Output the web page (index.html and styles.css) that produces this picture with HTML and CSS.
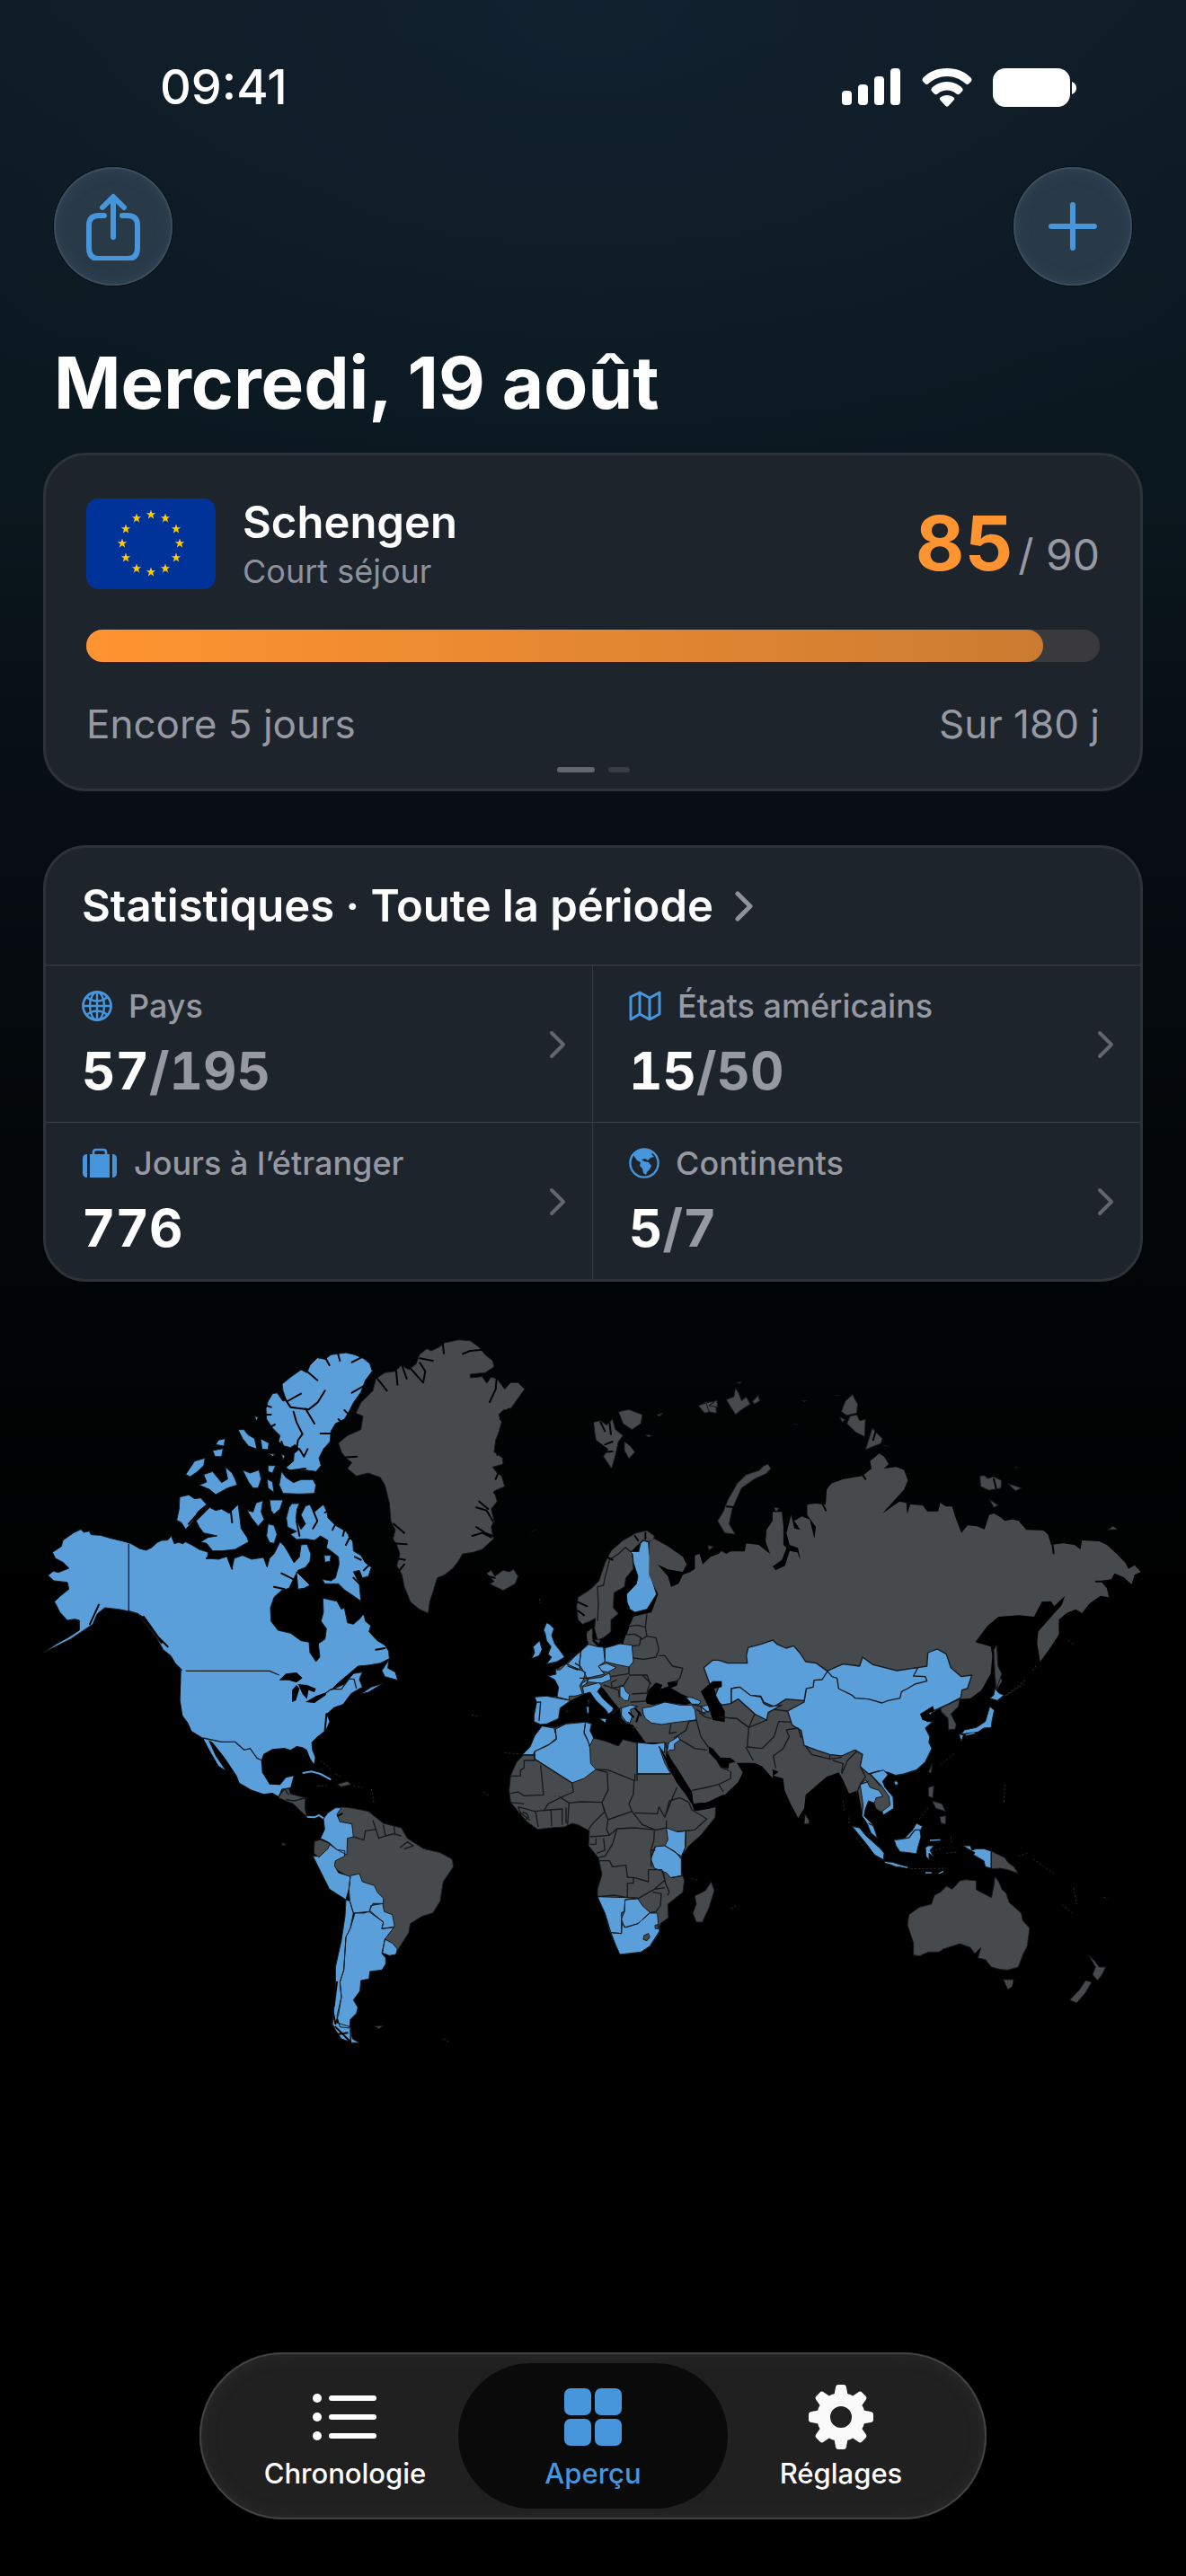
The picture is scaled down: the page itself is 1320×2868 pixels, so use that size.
FILE: index.html
```html
<!DOCTYPE html>
<html lang="fr">
<head>
<meta charset="utf-8">
<meta name="viewport" content="width=device-width, initial-scale=1">
<title>Aperçu</title>
<link rel="stylesheet" href="styles.css">
</head>
<body>
<div class="app">
  <div class="status">
    <span class="clock">09:41</span>
    <div class="indicators">
      <svg width="66" height="42" viewBox="0 0 66 42" fill="#fff" aria-hidden="true"><rect x="0" y="25" width="11" height="16" rx="4"/><rect x="18" y="18" width="11" height="23" rx="4"/><rect x="36" y="9" width="11" height="32" rx="4"/><rect x="54" y="0" width="11" height="41" rx="4"/></svg>
      <svg width="56" height="43" viewBox="0 0 56 43" fill="#fff" aria-hidden="true"><path d="M28 0C39 0 48 4 54.500 10.500Q56.500 13 54.500 15L52.500 17Q50.500 19 48.500 17C43 12 36 9 28 9S13 12 7.500 17Q5.500 19 3.500 17L1.500 15Q-.5 13 1.500 10.500C8 4 17 0 28 0Z"/><path d="M28 15C35 15 41 18 45 22Q46.500 24 45 25.500L42 28.500Q40.500 30 38.500 28.500C35 25.500 32 24.500 28 24.500S21 25.500 17.500 28.500Q15.500 30 14 28.500L11 25.500Q9.500 24 11 22C15 18 21 15 28 15Z"/><path d="M28 30C31 30 33.500 31 35.500 32.500Q37 34 35.500 35.500L29.500 42Q28 43.500 26.500 42L20.500 35.500Q19 34 20.500 32.500C22.500 31 25 30 28 30Z"/></svg>
      <svg width="93" height="43" viewBox="0 0 93 43" fill="#fff" aria-hidden="true"><rect width="86" height="43" rx="14"/><path d="M88 15Q93 17 93 22T88 29Z"/></svg>
    </div>
  </div>

  <header class="toolbar">
    <button class="round" type="button" aria-label="Partager">
      <svg width="60" height="76" viewBox="0 0 60 76" aria-hidden="true"><path d="M20 26H14Q3 26 3 37V62Q3 74 14 74H46Q57 74 57 62V37Q57 26 46 26H40M30 50V6M18 17L30 5L42 17"/></svg>
    </button>
    <button class="round" type="button" aria-label="Ajouter">
      <svg width="54" height="54" viewBox="0 0 54 54" aria-hidden="true"><path d="M27 3V51M3 27H51"/></svg>
    </button>
  </header>

  <h1>Mercredi, 19 août</h1>

  <section class="card stay">
    <div class="stay-head">
      <svg class="flag" width="144" height="101" viewBox="0 0 144 101" role="img" aria-label="Union européenne">
        <defs><path id="star" d="M0-5.500L1.300-1.700H5.200L2.100.6L3.200 4.500L0 2.200L-3.200 4.500L-2.100.6L-5.200-1.700H-1.300Z"/></defs>
        <rect width="144" height="101" rx="14" fill="#003399"/>
        <g fill="#ffcc00"><use href="#star" x="72" y="18"/><use href="#star" x="88" y="22"/><use href="#star" x="100" y="34"/><use href="#star" x="104" y="50"/><use href="#star" x="100" y="66"/><use href="#star" x="88" y="78"/><use href="#star" x="72" y="82"/><use href="#star" x="56" y="78"/><use href="#star" x="44" y="66"/><use href="#star" x="40" y="50"/><use href="#star" x="44" y="34"/><use href="#star" x="56" y="22"/></g>
      </svg>
      <div class="stay-name">
        <h2>Schengen</h2>
        <p>Court séjour</p>
      </div>
      <p class="stay-count"><strong>85</strong><span>/ 90</span></p>
    </div>
    <div class="bar" role="progressbar" aria-label="Jours utilisés" aria-valuemin="0" aria-valuemax="90" aria-valuenow="85"><div class="bar-fill" style="width:94.4%"></div></div>
    <div class="stay-foot"><span>Encore 5 jours</span><span>Sur 180 j</span></div>
    <div class="dots"><i class="on"></i><i></i></div>
  </section>

  <section class="card stats">
    <a class="stats-head" href="#stats"><h2>Statistiques · Toute la période</h2>
      <svg width="20" height="34" viewBox="0 0 20 34" aria-hidden="true"><path d="M3 3L17 17L3 31"/></svg></a>
    <div class="grid">
      <a class="cell" href="#pays">
        <span class="label"><svg width="34" height="34" viewBox="0 0 34 34" fill="none" stroke="#4795db" stroke-width="2.400" aria-hidden="true"><circle cx="17" cy="17" r="15.500" stroke-width="2.800"/><path d="M17 1V33M1 17H33M5 7Q17 16 29 7M5 27Q17 18 29 27"/><ellipse cx="17" cy="17" rx="8" ry="15.500"/></svg>Pays</span>
        <span class="value">57<em>/195</em></span>
        <svg class="go" width="20" height="32" viewBox="0 0 20 32" aria-hidden="true"><path d="M3 3L16 16L3 29"/></svg>
      </a>
      <a class="cell" href="#etats">
        <span class="label"><svg width="36" height="34" viewBox="0 0 36 34" fill="none" stroke="#4795db" stroke-width="3" stroke-linejoin="round" aria-hidden="true"><path d="M2 7L12 2L23 8L34 2V26L23 32L12 26L2 32ZM12 2V26M23 8V32"/></svg>États américains</span>
        <span class="value">15<em>/50</em></span>
        <svg class="go" width="20" height="32" viewBox="0 0 20 32" aria-hidden="true"><path d="M3 3L16 16L3 29"/></svg>
      </a>
      <a class="cell" href="#jours">
        <span class="label"><svg width="40" height="34" viewBox="0 0 40 34" fill="#4795db" aria-hidden="true"><path d="M6 7V33Q1 33 1 28V12Q1 7 6 7ZM34 7Q39 7 39 12V28Q39 33 34 33Z"/><rect x="9" y="7" width="22" height="26"/><path d="M13 9V5Q13 2 16 2H24Q27 2 27 5V9" fill="none" stroke="#4795db" stroke-width="2.600"/></svg>Jours à l’étranger</span>
        <span class="value">776</span>
        <svg class="go" width="20" height="32" viewBox="0 0 20 32" aria-hidden="true"><path d="M3 3L16 16L3 29"/></svg>
      </a>
      <a class="cell" href="#continents">
        <span class="label"><svg width="34" height="34" viewBox="0 0 34 34" aria-hidden="true"><circle cx="17" cy="17" r="15.600" fill="none" stroke="#4795db" stroke-width="2.400"/><path fill="#4795db" d="M5 8Q11 1 18 1Q24 2 27 5L25 7L28 10L24 11L21 14L18 12L14 13L17 15L22 16L25 20L23 24L20 27L19 30L16 28L15 23L12 20L13 16L9 14Z"/></svg>Continents</span>
        <span class="value">5<em>/7</em></span>
        <svg class="go" width="20" height="32" viewBox="0 0 20 32" aria-hidden="true"><path d="M3 3L16 16L3 29"/></svg>
      </a>
    </div>
  </section>

  <svg class="map" viewBox="48 1460 1224 840" role="img" aria-label="Carte des pays visités">
    <!-- Canada and Alaska -->
    <g transform="translate(40 1480) scale(.33333)">
      <path class="v" d="M150 668L160 678 178 674 184 686 215 688 250 698 300 710 318 716 345 732 368 738 388 728 405 712 420 705 440 704 452 690 462 716 476 712 490 716 500 710 520 720 545 735 575 745 572 765 610 768 640 758 655 798 662 765 690 755 720 768 760 762 772 795 780 765 795 750 815 710 830 725 845 750 862 780 880 760 885 720 905 718 918 750 915 775 900 795 875 805 862 830 845 865 820 872 795 895 783 930 785 975 808 1005 850 1015 885 1040 912 1045 915 1080 935 1110 948 1095 943 1050 965 1035 970 1000 952 975 960 945 958 898 990 905 1005 908 1020 935 1030 930 1040 980 1060 985 1080 968 1095 950 1100 975 1118 990 1112 1010 1140 1040 1165 1055 1178 1075 1180 1100 1150 1115 1110 1122 1075 1125 1040 1155 1010 1180 985 1205 1030 1185 1060 1150 1090 1145 1080 1170 1090 1195 1060 1212 1025 1232 995 1260 500 1260 485 1190 500 1165 485 1135 465 1115 450 1090 425 1070 405 1035 390 1000 365 965 340 950 312 942 275 935 230 930 205 950 190 985 160 1005 115 1035 65 1060 25 1080 70 1050 110 1028 145 1005 145 972 130 968 105 972 80 945 62 910 80 892 110 868 105 845 60 840 40 822 58 808 75 812 110 798 90 778 65 765 55 745 85 725 90 705 125 680Z"/>
      <path class="v" d="M822 183L850 160 885 135 905 145 915 120 940 95 965 100 985 85 1035 78 1065 85 1095 98 1115 115 1123 140 1100 170 1085 210 1060 245 1045 275 1030 300 1000 315 985 340 982 375 960 400 945 430 952 455 935 475 900 470 850 472 835 462 860 440 862 415 880 400 865 385 850 395 830 390 810 375 815 355 790 330 770 300 768 265 775 240 790 215 805 212 825 240 835 235 825 205Z"/>
      <path class="v" d="M820 475L835 495 860 512 885 502 925 502 935 520 930 548 880 550 825 548 812 520ZM675 335L695 335 708 352 730 365 738 400 710 390 690 365ZM750 365L778 380 775 402 755 400ZM610 370L632 365 628 390 600 385ZM590 405L625 398 620 425 598 425ZM500 485L530 440 565 430 560 455 540 475 515 492ZM545 520L570 510 560 485 590 475 620 512 640 500 632 460 655 480 665 500 672 520 640 530 600 552 580 535ZM690 470L715 480 745 470 752 500 742 530 725 530 710 510ZM775 455L800 455 790 480 775 475ZM772 500L790 510 795 545 775 530ZM775 414L800 418 790 424ZM820 418L832 422 825 435ZM730 290L742 294 736 306Z"/>
      <path class="v" d="M480 560L510 553 530 566 550 563 570 585 540 610 525 640 500 668 485 645 470 638 478 600ZM580 595L600 605 620 600 645 615 675 585 680 620 685 665 705 695 710 710 665 735 620 740 590 740 570 715 550 710 575 695 605 690 560 680 545 660 535 640 560 615ZM705 605L725 610 735 580 758 572 752 610 762 635 742 658 720 630ZM780 570L825 570 815 600 795 618 785 605ZM775 650L795 655 805 685 795 715 780 712 770 690ZM845 595L855 582 880 582 872 600 868 630 885 668 900 650 885 620 900 590 915 585 930 610 960 585 972 610 975 630 1000 655 1035 675 1058 705 1060 740 1085 755 1100 780 1120 795 1110 825 1090 830 1080 805 1060 810 1080 850 1085 908 1060 890 1030 870 1010 850 965 850 955 835 985 840 1000 830 1012 785 1010 760 985 740 970 730 975 705 950 690 930 705 900 700 870 702 850 685 870 675 840 660 836 630ZM870 810L890 830 915 855 895 865 875 868ZM962 755L985 755 982 775 965 778ZM1155 1140L1178 1105 1175 1132 1200 1145 1208 1172 1165 1160ZM1085 1218L1120 1195 1160 1182 1110 1212Z"/>
      <path class="fj" d="M820 215L850 260 910 268 940 245 965 205M860 275L870 310 890 350 875 370 870 400M900 265L930 315M840 240L885 215M905 140L940 170M965 92L980 120M1055 212L1110 180M1085 95L1055 110M1008 80L1015 105M880 400L895 425 907 400M950 348L985 348M555 600L510 650M600 575L650 600 655 645M800 735L812 690M885 590L870 640 880 690M915 580L940 640 925 665M1060 830L1090 860M1050 690L1035 720M820 815L860 835M795 860L830 868M570 765L650 745M210 920L180 985M360 960L420 1045M380 1000L440 1060M640 760L655 800M860 505L940 480M830 475L900 465M1045 690L1065 715M1030 670L1025 690M1000 650L990 670M1120 1130L1085 1160M985 600L965 612M1065 760L1085 770M1110 790L1095 805M1105 960L1085 945M1165 1065L1135 1070M770 255L785 260M770 285L785 285M785 325L798 318M820 375L825 390M1030 270L1040 280M1010 300L1020 310"/>
    </g>

    <!-- United States, Central and South America -->
    <g transform="translate(160 1840) scale(.33333)">
      <path class="v base" d="M125 60L420 60 460 75 490 95 520 110 560 130 545 165 600 140 640 122 700 125 685 145 665 172 635 182 610 205 620 230 608 258 580 280 560 300 562 325 572 350 568 372 555 352 545 325 530 316 510 312 490 325 470 318 430 322 400 338 392 360 395 400 420 440 455 442 475 418 500 412 490 450 460 455 450 480 430 468 400 472 360 458 320 435 310 410 270 350 230 300 216 292 240 345 272 392 250 378 225 335 198 285 160 262 148 235 130 210 122 160Z"/>
      <path class="g" d="M450 485L465 455 485 455 490 472 540 485 538 520 545 548 525 530 500 505ZM645 440L680 430 692 440 660 448ZM460 635L475 640 465 645ZM770 1248L800 1246 785 1256Z"/>
      <path class="g" d="M640 530L660 515 700 520 750 530 775 550 800 570 860 585 880 620 935 655 990 668 1030 690 1034 715 1000 765 990 830 965 870 930 880 890 905 885 935 850 990 815 1000 760 980 740 860 720 770 635 720 650 620Z"/>
      <path class="v" d="M600 555L615 535 640 518 660 518 645 540 655 565 695 572 700 615 680 620 678 675 645 658 620 635 590 620 604 590ZM565 680L585 680 620 640 645 658 672 662 670 680 640 695 637 712 650 735 690 748 685 790 675 825 620 790 600 750ZM690 745L720 738 730 765 770 778 780 800 800 820 800 838 765 838 752 865 700 870 688 830 685 790ZM755 862L758 845 798 838 803 865 830 875 838 915 795 922 800 900ZM675 825L688 830 700 870 690 920 675 950 668 1060 655 1100 660 1150 650 1210 640 1235 690 1250 690 1300 660 1290 640 1260 630 1240 635 1190 640 1110 640 1050 660 960 672 880ZM705 870L735 870 752 865 800 900 795 922 835 918 805 957 795 1005 808 1020 808 1040 795 1060 755 1065 752 1090 725 1095 722 1130 700 1160 715 1185 710 1205 690 1225 687 1254 655 1250 645 1215 660 1150 655 1100 668 1060 675 950 690 920ZM690 1258L697 1290 720 1303 692 1303ZM805 957L830 970 847 990 842 1008 820 1012 797 1003Z"/>
      <path class="g" d="M570 630L590 625 622 638 615 655 585 683 568 670Z"/>
      <path class="b" d="M198 285L260 298 305 298 335 325 355 320 378 352 395 360M700 615L735 626 740 595 775 590 765 560M775 590L785 620 807 612 800 575M807 612L835 605 860 612M835 580L840 610M545 485L500 495 475 490M535 485L505 495M450 480L470 455 485 475M855 652L880 632 900 645 870 655"/>
      <path class="fj" d="M645 1100L635 1180M630 1190L640 1240M640 1250L690 1300M645 1275L680 1270M610 205L605 260M648 545L662 538"/>
      <path class="vl" d="M530 402L560 397 590 405 625 424M545 548L570 550 585 543 600 553"/>
      <path class="gl" d="M590 360L625 390M640 405L660 415M580 445H610M700 445L730 450M760 455L768 500M1095 208L1115 212M1135 465L1155 480M1000 1290L1025 1302"/>
    </g>

    <!-- Great Lakes and the Canadian borders -->
    <g transform="translate(40 1480) scale(.33333)">
      <path class="sea" d="M812 1172L835 1150 870 1146 890 1165 870 1180 845 1172ZM855 1245L855 1205 870 1188 880 1200 868 1240ZM875 1185L905 1188 935 1200 930 1212 910 1205 905 1235 890 1218ZM900 1245L935 1225 970 1212 968 1222 930 1248Z"/>
      <path class="b" d="M310 716V942M312 942L340 950 420 1050M500 1141H780L812 1155M968 1215L985 1202H1020L1045 1168H1062L1070 1200"/>
    </g>

    <!-- Greenland, Iceland, Svalbard, Scandinavia, Great Britain -->
    <g transform="translate(360 1480) scale(.33333)">
      <path class="g" d="M320 85L345 65 360 72 385 60 405 45 450 35 490 38 520 60 540 85 565 105 570 125 540 145 490 150 490 162 530 158 545 180 560 160 580 165 605 200 625 178 650 178 672 200 650 230 625 265 600 270 585 285 595 310 585 345 575 370 570 410 598 430 600 450 565 460 580 480 595 490 605 525 570 540 580 575 560 600 570 640 560 660 568 700 530 735 500 745 465 750 450 775 430 800 405 820 380 830 365 880 355 910 350 948 320 935 290 910 270 860 262 820 245 790 255 750 245 720 232 700 240 670 225 640 220 580 205 520 190 495 150 480 110 490 80 465 95 445 75 430 60 410 50 380 80 355 125 335 132 290 108 280 125 245 150 220 165 205 175 165 205 145 240 140 260 120 285 135 310 115Z"/>
      <path class="g" d="M545 815L560 805 572 825 600 805 620 810 635 802 650 825 640 850 600 872 575 860 555 850 570 842ZM902 310L925 305 945 320 965 300 975 335 1000 355 985 375 975 420 962 465 935 425 950 400 910 370 905 340ZM985 275L1020 268 1065 285 1060 315 1030 335 1000 315ZM1005 375L1025 390 1040 410 1020 432 1005 405ZM1112 285L1135 280 1122 290ZM1255 255L1275 245 1310 240 1312 280 1285 275ZM1075 352L1098 355 1085 360ZM695 678L710 668Z"/>
      <path class="g" d="M850 970L845 925 850 895 890 870 920 840 940 780 960 740 1000 705 1045 680 1080 672 1105 690 1100 715 1065 705 1030 740 1035 800 1010 830 1005 860 970 880 968 930 985 950 960 970 960 1010 935 1030 915 1038 905 1000 908 965 890 975 865 985ZM880 1010L898 1000 898 1048 880 1040ZM905 1038L925 1035 920 1050Z"/>
      <path class="v" d="M1008 728L1025 742 1052 742 1058 715 1068 705 1085 710 1088 750 1095 780 1095 830 1112 885 1080 935 1040 945 1015 930 1012 885 1045 850 1050 825 1035 780 1032 750ZM735 1005L745 980 755 985 770 1000 762 1022 772 1050 795 1080 805 1095 780 1110 745 1118 762 1095 750 1085 760 1060 745 1040 740 1015ZM700 1060L722 1040 730 1070 720 1090 695 1100 705 1080Z"/>
      <path class="b" d="M1008 728L985 750 955 770 940 830 935 855 915 860 918 920 915 975M1008 728L1025 742 1052 742 1058 715 1068 705 1085 710 1102 705"/>
      <path class="fj" d="M180 165L212 205M243 140L247 185M262 120L278 165M290 130L333 178 340 140 322 112M322 97L365 105M398 45L402 80M465 82L490 72 530 68M578 165L575 200 555 243M60 428L112 425M510 595L545 605 565 640M520 575L550 600M497 690L530 680 560 695M510 660L540 680 565 690M235 650L270 680M235 715L278 718M245 765L272 770M250 810L270 785M570 545L590 560M620 265L590 300M598 375L580 420M590 465L575 500M925 310L940 340M955 310L960 350M940 385L965 375M935 410L965 408M848 910L880 925M850 940L870 955M945 760L965 770M1040 690L1050 705M1075 680V700M550 825L572 830"/>
    </g>

    <!-- Russia -->
    <g transform="translate(760 1520) scale(.34439 .33333)">
      <path class="g base" d="M-108 590L-92 580-48 605 0 640 12 665 0 690-48 682-82 665-48 705-38 740-14 730 0 700 25 690 39 680 39 635 54 630 64 665 90 640 116 630 125 620 140 630 155 622 200 622 205 595 245 600 282 630 268 590 270 550 290 520 290 490 320 490 325 540 325 600 335 610 320 650 290 672 300 685 330 670 345 620 370 625 380 650 372 610 345 600 335 560 350 500 360 545 380 550 360 520 385 505 410 515 425 578 430 540 402 500 402 465 430 462 462 465 465 415 480 395 520 380 580 370 610 345 605 320 635 295 650 305 665 330 650 345 690 340 715 350 727 385 715 415 645 495 700 455 722 460 725 497 735 465 775 468 790 488 825 488 832 460 850 472 870 472 880 505 900 560 920 535 950 538 975 548 990 500 1005 495 1030 510 1040 520 1065 515 1085 520 1110 550 1165 552 1180 565 1190 600 1230 595 1265 600 1285 615 1290 585 1345 588 1370 600 1400 628 1430 660 1440 680 1460 668 1480 690 1460 700 1450 732 1425 708 1395 695 1385 715 1350 720 1370 745 1377 775 1350 770 1315 795 1290 828 1270 815 1240 828 1215 850 1215 900 1190 940 1155 990 1145 930 1148 890 1195 835 1225 800 1235 770 1215 790 1200 805 1190 788 1160 790 1135 840 1085 835 1020 840 985 870 945 925 995 940 1000 970 995 1030 965 1085 930 1112 895 1115 600 1160 390 1260-120 1260-190 1160-193 930-160 840-101 825-80 765-110 700Z"/>
      <path class="g" d="M285 345L275 330 262 335 245 352 205 365 175 395 145 450 130 490 112 520 135 560 170 565 150 530 160 480 190 410 235 378 270 362ZM548 97L565 130 562 160 530 168 512 155 525 120ZM505 172L525 182 515 190ZM540 170L562 165 572 185 590 180 588 238 560 225 530 195ZM612 210L645 245 640 262 590 282ZM960 370L975 368 985 378 1005 372 1030 385 1028 410 990 418 962 405ZM1050 395L1072 402 1095 410 1075 420ZM990 448L1020 468 1005 475ZM1372 550L1390 537 1405 548ZM80 602L100 605 85 618ZM295 475L312 478 300 490ZM140 115L165 105 170 75 180 92 190 118 205 105 218 130 195 145 170 165 150 132ZM225 120L245 100 248 120 230 130ZM85 135L110 115 112 140ZM50 135L75 125 85 155 70 160ZM172 58L190 56 185 62ZM385 118L400 118 392 122ZM492 100L508 102ZM355 195L370 200ZM1015 935L1020 1020 1032 1055 1012 1090 1008 1020ZM650 268L665 272Z"/>
      <path class="fj" d="M142 472L162 474M450 460L462 485M580 365L590 380M1335 722L1370 722M1195 600L1198 628M1005 380L1012 410M625 215L615 250"/>
      <path class="gl" d="M1130 1020L1145 1000M1040 1105L1080 1075 1110 1050M1245 920L1262 930M1075 342L1085 338"/>
    </g>

    <!-- Europe, Africa, Middle East -->
    <g transform="translate(540 1760) scale(.33333)">
      <path class="g base" d="M460 212L470 180 495 178 480 150 500 122 560 108 740 100 960 200 960 660 925 620 895 605 840 608 820 590 780 560 745 555 700 480 640 470 600 475 555 475 535 460 540 410 510 420 485 430 490 455 495 482 472 475 455 460 450 430 425 400 395 360 380 350 372 372 400 410 428 432 410 445 400 428 370 400 350 370 325 380 285 400 250 425 240 465 205 478 185 480 163 470 172 405 165 388 240 388 245 355 235 335 210 318 235 312 235 295 270 278 300 250 325 230 345 212 338 178 355 158 358 200 375 220 395 225Z"/>
      <path class="g base" d="M615 475L700 460 840 460 840 608 860 640 845 672 800 715 740 740 695 745 690 705 650 645 620 600 603 570 605 540Z"/>
      <path class="g" d="M190 485L235 490 275 475 335 472 355 475 350 500 360 525 400 535 445 552 460 530 500 540 560 545 600 540 610 575 640 645 665 700 690 745 705 768 770 755 768 790 720 850 680 885 655 920 655 970 665 1000 660 1040 610 1080 612 1125 585 1145 580 1180 550 1220 520 1240 450 1248 435 1215 415 1170 400 1110 375 1055 375 1030 390 980 378 925 345 885 348 835 310 815 290 810 265 822 220 825 175 830 140 805 110 770 85 740 80 700 85 650 105 605 130 580 160 535ZM755 1005L765 1035 748 1090 725 1140 705 1140 693 1110 705 1080 700 1052 735 1035Z"/>
      <path class="sea" d="M580 550L612 625 640 675 670 715 690 745 698 768 760 758 830 720 795 714 740 740 695 744 690 705 650 640 620 595 603 570 605 592ZM745 553L760 560 785 590 830 592 835 605 815 610 812 628 785 622 772 600 748 575ZM535 400L545 365 570 340 592 348 585 362 612 352 608 340 645 332 640 350 620 358 655 378 690 392 710 400 670 415 600 405 560 415 540 410Z"/>
      <path class="v" d="M525 425L555 420 600 405 650 415 690 415 700 430 705 465 660 470 620 475 590 480 555 475 535 460 528 445ZM508 540L560 545 600 540 598 575 580 552 600 610 620 645 508 645ZM235 495L270 478 335 472 330 505 342 530 350 560 352 610 370 630 330 660 290 675 165 595 165 570 210 550 238 530ZM190 485L230 492 238 525 215 545 165 570 160 582 125 580 150 555 165 518ZM335 472L355 478 350 500 362 525 350 550 340 530 330 510ZM605 825L640 838 670 835 668 890 655 920 600 885 610 865ZM568 888L600 885 635 905 655 930 655 985 620 992 605 975 565 960 553 930ZM375 1055L470 1058 512 1060 467 1065 465 1105 455 1108 455 1178 420 1175 400 1110ZM467 1065L510 1062 525 1085 550 1108 510 1145 465 1158 455 1130 465 1105ZM420 1175L455 1178 457 1145 470 1158 510 1145 550 1110 575 1110 578 1145 582 1170 550 1220 520 1240 450 1248 435 1215Z"/>
      <path class="v" d="M165 388L205 385 285 400 250 425 245 460 205 478 185 480 163 470 163 450 172 405ZM210 318L237 312 235 297 250 298 270 278 300 290 335 305 328 330 316 350 325 378 300 385 280 385 280 398 240 388 245 355 232 330ZM320 235L345 212 375 220 395 222 400 270 378 285 398 312 340 325 330 305 315 280ZM320 235L300 252 275 278 315 298 315 270ZM400 225L450 210 490 215 495 270 480 288 440 280 400 270ZM378 285L405 275 438 290 410 305 390 302ZM320 345L345 328 388 322 415 308 420 330 390 342 345 338 325 352ZM325 355L380 340 388 352 375 370 395 395 428 425 425 435 412 445 402 430 370 400 350 372 330 378ZM380 460L405 460 402 475ZM338 420H347V440L340 445ZM343 396L348 400 345 412ZM450 348L462 350 470 370 482 380 478 400 465 400 450 385ZM455 425L485 415 510 420 485 430 490 455 483 475 470 470 455 450ZM670 388L690 390 720 402 715 412 690 412ZM720 420L745 415 750 435 725 440ZM612 540L630 530 645 520 650 532 632 545 632 565 615 565 605 580Z"/>
      <path class="g" d="M530 1185L545 1178 550 1190 540 1202 528 1198ZM567 1150L577 1148 578 1162 568 1162Z"/>
      <path class="b" d="M172 405H185L180 468M275 285L310 298M300 275L315 285M315 325H345L338 345M425 445L440 430M690 412L720 420 745 440M705 430L735 445M130 582H165V600H130V625L118 632V652H82M165 595L290 675 295 705 260 720 210 745 195 770M185 615L195 715 130 718 110 705 85 710M165 570V595M250 722L280 742 320 738 390 740 410 700 408 640 370 630M370 630L410 632 500 668V645M507 540V668M497 668L495 712 480 745 490 770 410 798 395 760 390 740M508 645H620M640 690L625 725 600 790M500 775L575 778 580 755 600 790M490 770L525 815 570 832 605 825 605 800M600 790L615 735 650 725 680 740 690 765 740 795 700 832 640 838M670 835L668 890M410 798L405 830 415 850 440 828 500 825 570 832M565 835L563 870 553 900 555 955M440 828L425 880 400 920 375 925M350 855L415 850M400 770L360 810 345 830M390 740L400 770M280 742L275 815M270 757V810M257 765V815M220 765L222 820M168 770L177 822M110 755L165 770 215 765 260 762M85 740L130 745M110 755L118 775 150 800M118 775Q140 770 145 790L130 800M350 880H370V860M395 860L400 900 372 910M378 935H415L425 955 470 950 475 990 500 992 545 1005 545 965 590 965 600 1000 565 1030 512 1060M375 1055L430 1050 475 1058 510 1060M475 1058V1010H495V992M560 1040L588 1045 585 1085 570 1105 550 1108M595 975L602 1010 615 1040 608 1050M565 1030L600 1025M660 985L620 992M553 900H568M568 888L555 920"/>
      <path class="b" d="M470 180L500 178 520 190 515 215 490 218M480 152L510 148 535 155 540 110M535 155L540 185 515 200M540 185L570 190 580 230 570 255 530 262 495 258M580 250L600 250 625 285 660 292 650 325 635 340M480 288L480 310 420 320M480 315L540 315 550 340 540 375 490 378M525 315L555 345M440 330L420 340 425 358 460 352 480 320M395 348L445 365 448 390M485 405L535 402M455 425L440 430M705 465L720 520 745 555M705 465L680 470 670 500 630 525M620 478L615 510 640 505M650 530L700 560 740 565M715 440L735 455 755 460M800 465L840 455 875 470 875 540 890 565 895 605M875 555L925 560 930 540 960 535M875 490L920 470 960 460M690 700L740 690 780 680 820 660 820 635M780 680L795 705M800 430L850 400 890 430 960 490M785 622L815 635M612 540L605 580"/>
      <path class="fj" d="M495 455L480 440M500 425L520 450M515 440L505 470M245 290L215 285M190 235L205 240M465 60L480 90"/>
      <path class="gl" d="M490 490L515 492M270 437L285 432M65 575L115 578M180 60L185 75M690 995L710 1000M820 1095L840 1085M230 720H250"/>
    </g>

    <!-- Central Asia, East Asia, Oceania -->
    <g transform="translate(820 1800) scale(.33333)">
      <path class="g base" d="M-60 250L-60 400-30 465 0 487 95 490 110 505 140 518 122 530 155 540 160 580 180 625 205 672 225 640 230 595 270 560 300 535 340 520 355 545 375 590 405 580 412 620 420 660 430 640 440 615 460 622 465 640 480 650 510 640 510 600 480 545 440 500 640 330 700 290 600 300 400 200 100 240Z"/>
      <path class="g" d="M228 660L242 680 240 692 225 692ZM680 305L745 275 740 300 715 325 733 360 730 375 707 378 705 338 685 322ZM640 520L652 490 650 522ZM640 570L658 565 655 605 640 600ZM652 615L685 625 697 650 665 640ZM678 668L698 665 698 692 682 690Z"/>
      <path class="v line" d="M170 315L225 285 232 240 258 212 300 182 355 158 410 165 420 135 455 160 535 180 605 170 635 165 638 120 670 108 700 125 715 170 750 200 785 195 770 240 752 245 748 270 710 290 655 315 635 350 655 350 630 372 645 400 642 420 652 440 630 485 600 512 560 525 530 530 505 520 475 515 440 525 412 500 420 460 395 445 350 465 310 460 265 445 225 430 215 380 185 362Z"/>
      <path class="v line" d="M-110 170L-80 145-60 145-30 155 35 155 32 130 38 103 80 92 120 78 135 92 165 105 190 97 210 120 230 150 265 155 303 182 285 210 258 212 255 235 232 240 225 280 165 275 125 300 90 285 80 265 40 262 5 235-18 240-18 300-45 300-75 270-60 235-90 225Z"/>
      <path class="v line" d="M-18 240L10 235 45 262 80 268 90 290 110 300 150 295 105 320 100 345 60 325 5 275-18 290Z"/>
      <path class="g line" d="M-80 300L-20 290 5 275 60 325 40 370 0 340-60 335Z"/>
      <path class="sea" d="M-120 250L-80 215-50 215-50 235-75 240-70 260-55 290-40 315-40 352-80 345-95 300ZM612 325L655 298 660 315 642 322 655 335 640 350 620 345Z"/>
      <path class="v" d="M412 560L432 545 445 570 475 580 488 600 465 605 460 622 440 615 430 640 425 665 455 695 470 740 448 722 435 690 418 665 422 630ZM445 525L490 512 505 528 487 550 495 570 522 602 524 640 490 662 485 650 512 630 508 600 480 560ZM525 550Q540 545 538 560Q528 568 525 550ZM385 700L410 705 430 730 480 775 492 790 490 812 460 795 430 755ZM492 818L520 820 575 838 530 835ZM525 745L560 740 585 715 600 690 620 700 612 715 615 735 605 770 600 792 575 788 545 785 532 765ZM630 770L640 765 658 765 645 780 658 802 642 790 642 812 632 800ZM755 765L780 765 785 780 800 775 825 775 850 783 850 840 830 835 825 815 790 795 795 788ZM845 272L858 262 862 240 875 255 892 262 870 280ZM845 300L860 312 852 350 850 370 825 372 805 385 750 392 760 378 800 370 830 350ZM742 392L757 395 750 417Z"/>
      <path class="g" d="M850 783L895 805 905 820 925 835 940 857 905 845 880 840 850 842ZM575 995L610 970 650 960 660 930 680 920 700 900 720 910 745 882 765 878 800 882 800 912 850 938 858 900 862 868 875 885 885 910 900 925 910 955 950 990 955 1015 978 1040 970 1100 955 1130 940 1170 905 1180 880 1178 850 1170 830 1145 805 1140 815 1105 795 1125 780 1105 745 1092 720 1100 690 1110 675 1120 640 1120 610 1133 590 1130 590 1090 570 1030ZM890 1212L925 1212 920 1235 905 1245ZM1175 1130L1195 1150 1210 1170 1232 1170 1220 1195 1205 1215 1188 1195 1198 1170ZM1165 1215L1185 1220 1165 1255 1135 1290 1112 1280 1145 1245ZM858 110L868 95 872 165 885 190 868 240 862 200Z"/>
      <path class="b" d="M303 182L318 200 335 205 340 240 385 262 395 272 440 275 485 288 505 280 545 272 550 250 570 240 595 225 635 215 630 200 590 198 605 170M170 315L125 310M100 345L40 370 35 435 85 440 125 400 140 350 180 352M165 378L175 400 155 440 122 465 130 505M165 378L205 372 215 405M230 432L250 460 310 475 312 460M312 475L350 470M320 480L355 490 350 520M350 525L370 480 400 450M412 500L430 535 412 560 400 590M445 525L480 565M530 745L575 738 595 712 612 712M850 783V842M440 690L460 700M685 320L705 340M30 435L55 480M-60 335L0 340 40 370M412 560L440 550"/>
      <path class="gl" d="M610 675L642 635M1125 905L1135 960M1085 962L1120 990M940 800L970 790M990 810L1065 862M1225 938L1240 940M355 615L360 650M400 740L435 780M580 842L700 840M650 785L690 770M715 735L718 760M895 560L892 620M680 495L730 455M900 262L960 225M700 790L740 785M375 670V690"/>
      <path class="vl thin" d="M645 747L680 745M495 820L570 838M675 858L690 850M765 395L795 388M630 855H650"/>
    </g>
  </svg>

  <nav class="tabs" aria-label="Navigation principale">
    <button class="tab" type="button">
      <svg width="72" height="72" viewBox="0 0 72 72" fill="#fff" aria-hidden="true"><circle cx="5" cy="15" r="5"/><circle cx="5" cy="36" r="5"/><circle cx="5" cy="57" r="5"/><rect x="18" y="12" width="53" height="6" rx="3"/><rect x="18" y="33" width="53" height="6" rx="3"/><rect x="18" y="54" width="53" height="6" rx="3"/></svg>
      <span>Chronologie</span>
    </button>
    <button class="tab active" type="button" aria-current="page">
      <svg width="72" height="72" viewBox="0 0 72 72" fill="#4795db" aria-hidden="true"><rect x="4" y="4" width="30" height="30" rx="7"/><rect x="38" y="4" width="30" height="30" rx="7"/><rect x="4" y="38" width="30" height="30" rx="7"/><rect x="38" y="38" width="30" height="30" rx="7"/></svg>
      <span>Aperçu</span>
    </button>
    <button class="tab" type="button">
      <svg width="72" height="72" viewBox="0 0 72 72" fill="#fafafa" aria-hidden="true"><defs><path id="tooth" d="M28 14L30 3Q30.500 0 33 0H39Q41.500 0 42 3L44 14Z"/></defs><path fill-rule="evenodd" d="M36 9A27 27 0 1 1 36 63A27 27 0 1 1 36 9ZM36 24A12 12 0 1 0 36 48A12 12 0 1 0 36 24Z"/><use href="#tooth"/><use href="#tooth" transform="rotate(45 36 36)"/><use href="#tooth" transform="rotate(90 36 36)"/><use href="#tooth" transform="rotate(135 36 36)"/><use href="#tooth" transform="rotate(180 36 36)"/><use href="#tooth" transform="rotate(225 36 36)"/><use href="#tooth" transform="rotate(270 36 36)"/><use href="#tooth" transform="rotate(315 36 36)"/></svg>
      <span>Réglages</span>
    </button>
  </nav>
</div>
</body>
</html>
```
FILE: styles.css
```css
* { box-sizing: border-box; }

body {
  margin: 0;
  background: #000;
  color: #fff;
  font-family: Inter, "Liberation Sans", sans-serif;
}

h1, h2, p { margin: 0; }
a { color: inherit; text-decoration: none; }
button { border: 0; padding: 0; font: inherit; color: inherit; }
svg { display: block; flex: none; }

.app {
  display: flex;
  flex-direction: column;
  min-height: 100vh;
  padding: 0 48px 63px;
  background:
    radial-gradient(ellipse 900px 600px at 50% 0, rgba(24, 48, 70, .3), transparent),
    linear-gradient(#0f1b25 0, #0b1820 480px, #070d13 920px, #020506 1440px, #000 1800px);
}

/* Status bar */
.status {
  display: flex;
  align-items: center;
  justify-content: space-between;
  padding: 66px 74px 0 130px;
}
.clock { font-size: 54px; line-height: 62px; font-weight: 500; }
.indicators { display: flex; align-items: center; gap: 23px; }

/* Toolbar */
.toolbar { display: flex; justify-content: space-between; margin-top: 58px; padding: 0 12px; }
.round {
  display: flex;
  align-items: center;
  justify-content: center;
  width: 132px;
  height: 132px;
  border-radius: 50%;
  background: #283948;
  box-shadow: inset 0 0 0 2px #3a4c5a, inset 0 0 18px rgba(80, 104, 124, .35), 0 0 0 1px #070e14;
}
.round path { fill: none; stroke: #4795db; stroke-width: 6; stroke-linecap: round; stroke-linejoin: round; }

h1 { margin: 60px 0 30px; padding: 0 12px; font-size: 80px; line-height: 96px; font-weight: 700; }

/* Cards */
.card { border: 3px solid #2d3338; border-radius: 48px; background: #1e242b; }

.stay { padding: 45px 45px 18px; }
.stay-head { display: flex; align-items: center; gap: 30px; height: 107px; }
.stay-name { flex: 1; }
.stay h2 { font-size: 49px; line-height: 60px; font-weight: 600; }
.stay-name p { font-size: 36px; line-height: 48px; color: #8e929b; }
.stay-count { display: flex; align-items: baseline; gap: 6px; padding-top: 12px; color: #9699a2; font-size: 48px; line-height: 100px; }
.stay-count strong { color: #ff9430; font-size: 84px; font-weight: 700; }
.bar { height: 36px; margin-top: 42px; border-radius: 18px; background: #3a3a3c; }
.bar-fill { height: 100%; border-radius: 18px; background: linear-gradient(90deg, #ff9430, #cc7c32); }
.stay-foot { display: flex; justify-content: space-between; margin-top: 42px; font-size: 44px; line-height: 54px; color: #9699a2; }
.dots { display: flex; justify-content: center; gap: 15px; margin-top: 21px; }
.dots i { width: 24px; height: 6px; border-radius: 3px; background: #383d44; }
.dots .on { width: 42px; background: #62666e; }

.stats { margin-top: 60px; overflow: hidden; }
.stats-head { display: flex; align-items: center; gap: 24px; height: 130px; padding: 0 40px; }
.stats-head h2 { font-size: 49px; line-height: 60px; font-weight: 600; }
.stats-head path { fill: none; stroke: #8e929b; stroke-width: 5; stroke-linecap: round; stroke-linejoin: round; }
.grid { display: grid; grid-template-columns: 1fr 1fr; }
.cell {
  display: grid;
  grid-template-columns: 1fr auto;
  align-items: center;
  row-gap: 14px;
  padding: 23px 28px 21px 40px;
  border-top: 1px solid #3d4248;
}
.cell:nth-child(odd) { border-right: 1px solid #34393f; }
.label { display: flex; align-items: center; gap: 18px; font-size: 36px; line-height: 44px; font-weight: 500; color: #9699a2; }
.value { grid-row: 2; font-size: 58px; line-height: 72px; font-weight: 700; font-variant-numeric: tabular-nums; }
.value em { font-style: normal; color: #9699a2; }
.go { grid-column: 2; grid-row: 1 / 3; }
.go path { fill: none; stroke: #62666d; stroke-width: 4; stroke-linecap: round; stroke-linejoin: round; }

/* World map */
.map { width: 100%; height: auto; margin-top: 33px; overflow: visible; }
.map path { stroke-linejoin: round; }
.v { fill: #5a9fda; stroke: #14181b; stroke-width: 3; }
.g { fill: #474a4c; stroke: #14181b; stroke-width: 3; }
.line { stroke: #15191c; stroke-width: 4; }
.base { stroke: none; }
.sea { fill: #000; }
.b { fill: none; stroke: #15191c; stroke-width: 4; }
.fj { fill: none; stroke: #020303; stroke-width: 6; stroke-linecap: round; }
.vl { fill: none; stroke: #5a9fda; stroke-width: 6; }
.gl { fill: none; stroke: #2b2d2e; stroke-width: 3; stroke-dasharray: 7 6; }
.thin { stroke-width: 4; }

/* Tab bar */
.tabs {
  display: flex;
  align-self: center;
  width: 876px;
  max-width: 100%;
  margin-top: auto;
  padding: 12px 24px;
  border-radius: 93px;
  background: #202020;
  box-shadow: inset 0 0 0 2px #424242, inset 0 0 20px rgba(90, 90, 90, .25);
}
.tab {
  position: relative;
  display: flex;
  flex: 1;
  flex-direction: column;
  align-items: center;
  gap: 8px;
  padding: 24px 0 20px;
  background: none;
  font-size: 31px;
  line-height: 38px;
  font-weight: 500;
}
.tab svg, .tab span { position: relative; }
.active { color: #4795db; }
.active::before { content: ""; position: absolute; inset: 0 -12px; border-radius: 81px; background: #0a0a0a; }
```
